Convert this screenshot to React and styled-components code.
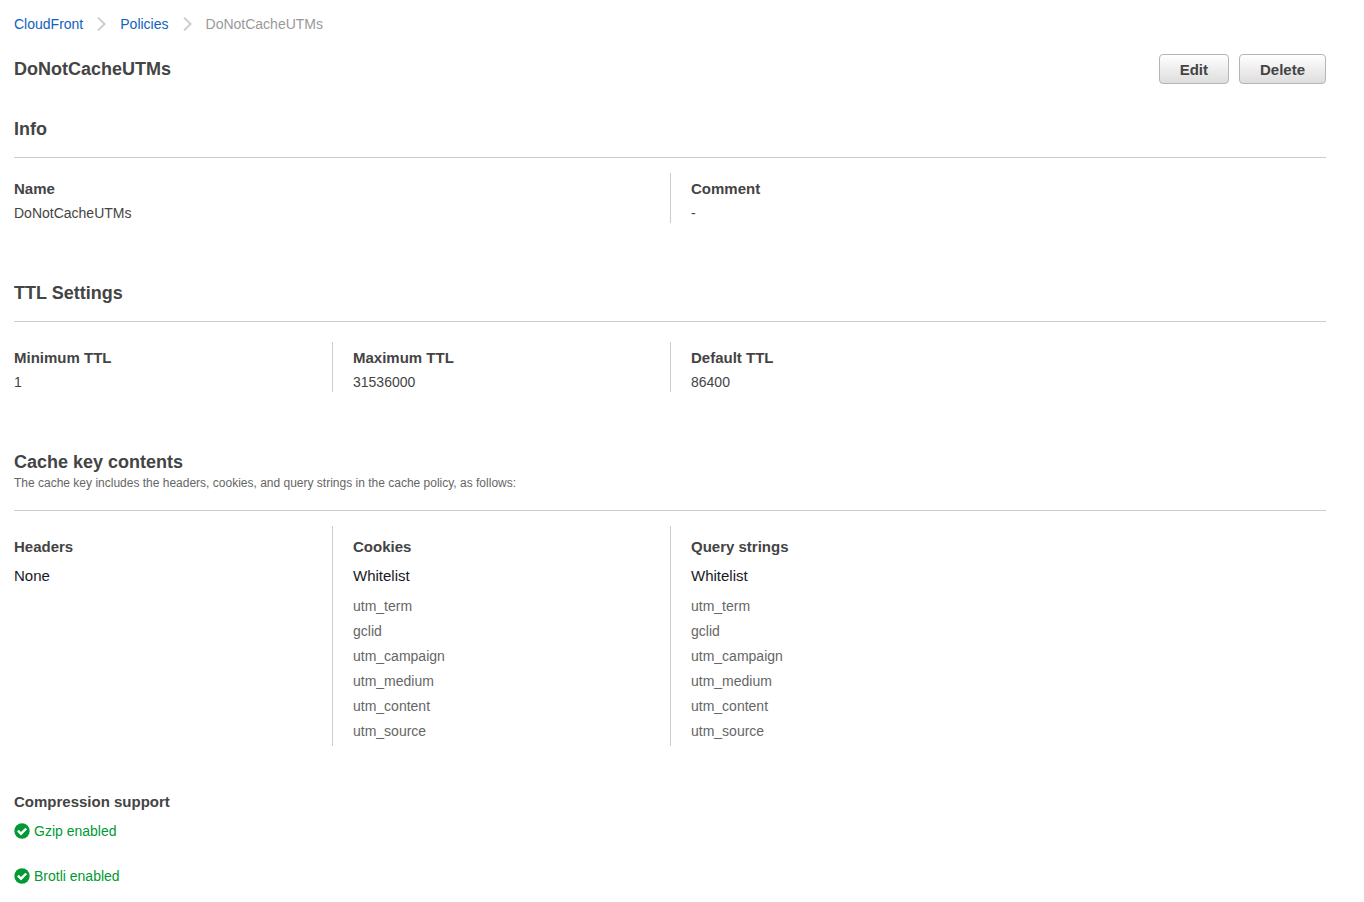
import React from "react";
import styled, { createGlobalStyle, css } from "styled-components";

const GlobalStyle = createGlobalStyle`
  * {
    box-sizing: border-box;
  }

  body {
    margin: 0;
    background-color: white;
    color: #444;
    font-family: "Helvetica Neue", "Liberation Sans", Arial, sans-serif;
    font-size: 14px;
    line-height: 20px;
    overflow-x: hidden;
  }
`;

const Page = styled.main`
  padding: 14px 38px 16px 14px;
`;

const BreadcrumbList = styled.ol`
  display: flex;
  align-items: center;
  gap: 13px;
  margin: 0;
  padding: 0;
  list-style: none;
`;

const Crumb = styled.li`
  display: flex;
  align-items: center;
  gap: 14px;
  color: #999;
`;

const CrumbLink = styled.a`
  color: #0f62bd;
  text-decoration: none;
  &:hover {
    text-decoration: underline;
  }
`;

const Header = styled.header`
  display: flex;
  align-items: center;
  justify-content: space-between;
  margin-top: 20px;
`;

const Title = styled.h1`
  margin: 0;
  font-size: 18px;
  line-height: 22px;
`;

const Actions = styled.div`
  display: flex;
  gap: 10px;
`;

const Button = styled.button`
  height: 30px;
  padding: 0 20px;
  color: #444;
  font-family: inherit;
  font-size: 15px;
  font-weight: bold;
  border: 1px solid #b5b5b5;
  border-radius: 4px;
  background: linear-gradient(#fff, #ddd);
  cursor: pointer;
  &:hover {
    background: linear-gradient(#fff, #ccc);
  }
`;

const Section = styled.section`
  margin-top: ${(props) => (props.first ? "34px" : "59px")};
`;

const SectionHeader = styled.div`
  padding-bottom: 17px;
  border-bottom: 1px solid #ccc;
`;

const Heading = styled.h2`
  margin: 0;
  font-size: 18px;
  line-height: 22px;
`;

const Description = styled.p`
  margin: 0;
  color: #666;
  font-size: 12px;
`;

const Columns = styled.div`
  display: grid;
  grid-template-columns: repeat(4, 1fr);
  margin: ${(props) => (props.spaced ? "20px" : "15px")} -20px 0;
`;

const Column = styled.div`
  padding: 6px 20px 0;

  & + & {
    border-left: 1px solid #ccc;
  }

  ${(props) =>
    props.wide &&
    css`
      grid-column: span 2;
    `}

  ${(props) =>
    props.tall &&
    css`
      padding-top: 11px;
      padding-bottom: 2px;
    `}
`;

const Label = styled.h3`
  margin: 0;
  font-size: 15px;
  line-height: 20px;
`;

const Value = styled.p`
  margin: 4px 0 0;
`;

const Behavior = styled.p`
  margin: 9px 0 0;
  color: #16191f;
  font-size: 15px;
`;

const KeyList = styled.ul`
  margin: 8px 0 0;
  padding: 0;
  color: #666;
  line-height: 25px;
  list-style: none;
`;

const Compression = styled.section`
  margin-top: 46px;
`;

const StatusList = styled.ul`
  display: flex;
  flex-direction: column;
  gap: 25px;
  margin: 9px 0 0;
  padding: 0;
  list-style: none;
`;

const Status = styled.li`
  display: flex;
  align-items: center;
  gap: 4px;
  color: #093;
`;

const ChevronIcon = () => (
  <svg width="10" height="14" viewBox="0 0 10 14" fill="none" aria-hidden="true">
    <path d="M1 0.6L7.6 7L1 13.4" stroke="#ccc" strokeWidth="1.9" />
  </svg>
);

const CheckIcon = () => (
  <svg width="16" height="16" viewBox="0 0 16 16" fill="none" aria-hidden="true">
    <circle cx="8" cy="8" r="7.7" fill="#093" />
    <path d="M3.9 7.7L7 10.7L12.2 5.5" stroke="#fff" strokeWidth="2.4" />
  </svg>
);

const utmKeys = [
  "utm_term",
  "gclid",
  "utm_campaign",
  "utm_medium",
  "utm_content",
  "utm_source",
];

const ttlSettings = [
  { label: "Minimum TTL", value: "1" },
  { label: "Maximum TTL", value: "31536000" },
  { label: "Default TTL", value: "86400" },
];

const cacheKeys = [
  { label: "Headers", behavior: "None", keys: [] },
  { label: "Cookies", behavior: "Whitelist", keys: utmKeys },
  { label: "Query strings", behavior: "Whitelist", keys: utmKeys },
];

const App = () => {
  return (
    <Page>
      <GlobalStyle />
      <nav aria-label="Breadcrumb">
        <BreadcrumbList>
          <Crumb>
            <CrumbLink href="#cloudfront">CloudFront</CrumbLink>
            <ChevronIcon />
          </Crumb>
          <Crumb>
            <CrumbLink href="#policies">Policies</CrumbLink>
            <ChevronIcon />
          </Crumb>
          <Crumb>DoNotCacheUTMs</Crumb>
        </BreadcrumbList>
      </nav>

      <Header>
        <Title>DoNotCacheUTMs</Title>
        <Actions>
          <Button type="button">Edit</Button>
          <Button type="button">Delete</Button>
        </Actions>
      </Header>

      <Section first>
        <SectionHeader>
          <Heading>Info</Heading>
        </SectionHeader>
        <Columns>
          <Column wide>
            <Label>Name</Label>
            <Value>DoNotCacheUTMs</Value>
          </Column>
          <Column wide>
            <Label>Comment</Label>
            <Value>-</Value>
          </Column>
        </Columns>
      </Section>

      <Section>
        <SectionHeader>
          <Heading>TTL Settings</Heading>
        </SectionHeader>
        <Columns spaced>
          {ttlSettings.map(({ label, value }) => (
            <Column key={label}>
              <Label>{label}</Label>
              <Value>{value}</Value>
            </Column>
          ))}
        </Columns>
      </Section>

      <Section>
        <SectionHeader>
          <Heading>Cache key contents</Heading>
          <Description>
            The cache key includes the headers, cookies, and query strings in
            the cache policy, as follows:
          </Description>
        </SectionHeader>
        <Columns>
          {cacheKeys.map(({ label, behavior, keys }) => (
            <Column key={label} tall>
              <Label>{label}</Label>
              <Behavior>{behavior}</Behavior>
              {keys.length > 0 && (
                <KeyList>
                  {keys.map((key) => (
                    <li key={key}>{key}</li>
                  ))}
                </KeyList>
              )}
            </Column>
          ))}
        </Columns>
      </Section>

      <Compression>
        <Label>Compression support</Label>
        <StatusList>
          <Status>
            <CheckIcon />
            Gzip enabled
          </Status>
          <Status>
            <CheckIcon />
            Brotli enabled
          </Status>
        </StatusList>
      </Compression>
    </Page>
  );
};

export default App;
